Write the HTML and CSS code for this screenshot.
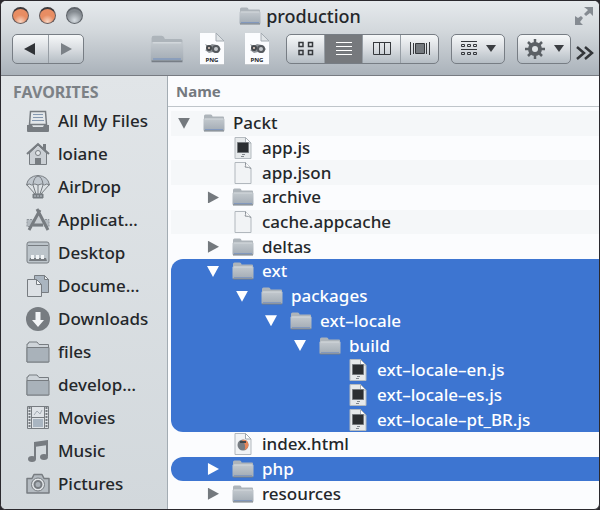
FILE: index.html
```html
<!DOCTYPE html>
<html lang="en">
<head>
<meta charset="utf-8">
<title>production</title>
<link rel="stylesheet" href="styles.css">
</head>
<body>
<svg class="defs" aria-hidden="true">
  <defs>
    <linearGradient id="g-folder" x1="0" y1="0" x2="0" y2="1"><stop offset="0" stop-color="#c3c9ce"/><stop offset="1" stop-color="#a2abb4"/></linearGradient>
  </defs>
  <symbol id="folder" viewBox="0 0 22 18">
    <path d="M1 3.500V2q0-1.500 1.500-1.500h5q1.200 0 1.700 1l.4 1H20q1 0 1 1V16H1z" fill="#adb4ba"/>
    <path d="M.5 5.500q0-1 1-1h19q1 0 1 1V16q0 1-1 1h-19q-1 0-1-1z" fill="url(#g-folder)"/>
    <path d="M2 5h18" stroke="#d2d7db"/><path d="M2 15.500h18" stroke="#8298bd"/><path d="M1 17h20" stroke="#777e86"/>
  </symbol>
  <symbol id="js" viewBox="0 0 18 22">
    <path d="M1 .5h10.500l5.500 5.500v15.500H1z" fill="#e6e9eb" stroke="#b4babf"/>
    <path d="M11.500.5v5.500H17z" fill="#fff" stroke="#a9b0b6"/>
    <path d="M3.500 5.500h11v10h-11z" fill="#2b2e31" stroke="#74787c"/><path d="M8 17.500h3M7 19.500h3" stroke="#83888d"/>
  </symbol>
  <symbol id="page" viewBox="0 0 18 22">
    <path d="M1 .5h10.500l5.500 5.500v15.500H1z" fill="#f1f3f5" stroke="#b1b7bd"/>
    <path d="M11.500.5q.5 4-.5 4.500 4 0 6 1.500" fill="#fff" stroke="#888e95"/>
  </symbol>
  <symbol id="html" viewBox="0 0 18 22">
    <path d="M1 .5h10.500l5.500 5.500v15.500H1z" fill="#f1f3f5" stroke="#b1b7bd"/>
    <path d="M11.500.5v5.500H17z" fill="#fff" stroke="#a1a8ae"/>
    <circle cx="9" cy="12" r="5.500" fill="#777c82"/><path d="M8 7q6-1 6.500 5-.5 4-4 5 2-5-2.500-10z" fill="#e8875a"/><path d="M6 8h6v2H6z" fill="#43474b"/>
  </symbol>
  <symbol id="png" viewBox="0 0 24 32">
    <path d="M0 0h16l8 8v24H0z" fill="#fbfcfe"/><path d="M16 0v8h8z" fill="#dfe3e6" stroke="#a4abb2"/>
    <path d="M5 11l4 2 3-2 5 1 4 4-3 4-5-1-4 1-4-3 3-1z" fill="#8d9297"/><circle cx="9" cy="15" r="3" fill="#44484c"/><circle cx="16" cy="16" r="4" fill="#54585d"/><circle cx="16" cy="16" r="2" fill="#c4c8cc"/><circle cx="9" cy="15" r="1" fill="#e6d0c4"/>
    <path d="M0 32h24" stroke="#8d949b"/>
  </symbol>
</svg>
<div class="window">
  <header class="chrome">
    <div class="titlebar">
      <div class="lights">
        <button class="light" aria-label="Close"></button>
        <button class="light" aria-label="Minimize"></button>
        <button class="light off" aria-label="Zoom"></button>
      </div>
      <h1 class="title"><svg class="title-icon"><use href="#folder"/></svg>production</h1>
      <button class="fullscreen" aria-label="Full screen"><svg width="20" height="20" viewBox="0 0 20 20" fill="#858b92"><path d="M10 1h9v9l-3-3-4 3-2-2 4-4zM1 10l3 2 3-2 2 2-3 4 3 3H1z"/></svg></button>
    </div>
    <div class="toolbar">
      <div class="group nav">
        <button aria-label="Back"><svg width="12" height="12" viewBox="0 0 12 12"><path d="M0 6l11-6v12z" fill="#303337"/></svg></button>
        <button aria-label="Forward"><svg width="12" height="12" viewBox="0 0 12 12"><path d="M12 6L1 0v12z" fill="#7b8187"/></svg></button>
      </div>
      <div class="shortcuts">
        <button class="shortcut-folder" aria-label="Folder"><svg class="big-folder"><use href="#folder"/></svg></button>
        <button class="png"><svg><use href="#png"/></svg><span>PNG</span></button>
        <button class="png"><svg><use href="#png"/></svg><span>PNG</span></button>
      </div>
      <div class="group views">
        <button aria-label="Icons"><svg width="16" height="16" viewBox="0 0 16 16" fill="none" stroke="#36393d" stroke-width="1.500"><path d="M1 1.500h4v4H1zM10.500 1.500h4v4h-4zM1 9.500h4v4H1zM10.500 9.500h4v4h-4z"/></svg></button>
        <button class="active" aria-label="List"><svg width="16" height="16" viewBox="0 0 16 16" stroke="#fff"><path d="M0 1.500h16M0 5.500h16M0 9.500h16M0 13.500h16"/></svg></button>
        <button aria-label="Columns"><svg width="18" height="16" viewBox="0 0 18 16" fill="none" stroke="#36393d"><path d="M.5 1.500h17v12H.5zM6.500 1.500v12M11.500 1.500v12M0 1.500h18"/></svg></button>
        <button aria-label="Cover Flow"><svg width="20" height="16" viewBox="0 0 20 16" stroke="#36393d"><path d="M.5 1v13M3.500 2v11M16.500 2v11M19.500 1v13"/><path d="M5.500 2.500h9v10h-9z" fill="#74797e"/></svg></button>
      </div>
      <button class="group menu" aria-label="Arrange"><svg width="16" height="16" viewBox="0 0 16 16" fill="none" stroke="#36393d"><path d="M0 .5h16M0 8.500h16M.5 3.500h3v2h-3zM6.500 3.500h3v2h-3zM12.500 3.500h3v2h-3zM.5 11.500h3v2h-3zM6.500 11.500h3v2h-3zM12.500 11.500h3v2h-3z"/></svg><i class="caret"></i></button>
      <button class="group menu" aria-label="Action"><svg width="20" height="20" viewBox="0 0 20 20"><path d="M10 0v20M0 10h20M3 3l14 14M17 3L3 17" stroke="#5b6065" stroke-width="2.500"/><circle cx="10" cy="10" r="5" fill="#dfe3e6" stroke="#5b6065" stroke-width="4"/></svg><i class="caret"></i></button>
      <button class="more" aria-label="More"><svg width="18" height="14" viewBox="0 0 18 14" fill="none" stroke="#33363a" stroke-width="2.500"><path d="M1 1l7 6-7 6M9 1l7 6-7 6"/></svg></button>
    </div>
  </header>
  <div class="content">
    <nav class="sidebar">
      <h2>FAVORITES</h2>
      <a href="#"><svg viewBox="0 0 24 24"><path d="M4.500 2.500h15l1 13h-17z" fill="#e3e7ea" stroke="#777c81" stroke-width="1.500"/><path d="M7 5.500h10M7 8.500h10M6 11.500h12" stroke="#8498b0"/><path d="M1 16h5l1 2h10l1-2h5v6q0 1-1 1H2q-1 0-1-1z" fill="#777c81"/></svg><span>All My Files</span></a>
      <a href="#"><svg viewBox="0 0 24 24"><path d="M17 2h3v6h-3z" fill="#777c81"/><path d="M3.500 11v11.500h17V11L12 3z" fill="#cbd0d5" stroke="#777c81"/><path d="M1 12L12 2l11 10" fill="none" stroke="#777c81" stroke-width="2"/><circle cx="12" cy="11" r="2.500" fill="#e4e8eb" stroke="#777c81"/><path d="M9 16h6v6H9z" fill="#777c81"/></svg><span>loiane</span></a>
      <a href="#"><svg viewBox="0 0 24 24" fill="none" stroke="#777c81"><path d="M.5 10Q2 1 12 .5 22 1 23.500 10q-3-2-5 0-3-2-6.500 0-3-2-6.500 0-2-2-5 0z" fill="#c0c7ce"/><path d="M7 9Q8 2 12 1q4 1 5 8M1 10l8 9M23 10l-8 9M7 10l3 9M17 10l-3 9M12 10v9"/><path d="M7 19h10v4H7z" fill="#777c81"/><path d="M8 21h8" stroke="#c0c7ce" stroke-dasharray="2 1"/></svg><span>AirDrop</span></a>
      <a href="#"><svg viewBox="0 0 24 24" fill="none" stroke="#777c81"><path d="M1 11.500h22v7H1z" fill="#b4bbc1" stroke="#8f959b" stroke-dasharray="2 1"/><path d="M12 5l7 14H5z" fill="#c9ced3" stroke="none"/><path d="M14 2L3 22M11 1l11 21M7 17h10" stroke-width="3"/></svg><span>Applicat…</span></a>
      <a href="#"><svg viewBox="0 0 24 24"><rect x="1" y="1" width="22" height="21" rx="2" fill="#bcc4ca" stroke="#777c81"/><path d="M2 4.500h20" stroke="#777c81"/><path d="M4 17h16l1 3H3z" fill="#777c81"/><path d="M5 14h3v4H5zM10 14h3v4h-3zM15 14h3v4h-3z" fill="#f1f4f6"/></svg><span>Desktop</span></a>
      <a href="#"><svg viewBox="0 0 24 24" stroke="#777c81"><path d="M8.500 1.500h10l4 4v13h-14z" fill="#aab5c0"/><path d="M18.500 1.500v4h4z" fill="#e8ecef"/><path d="M1.500 5.500h9l5 5v12h-14z" fill="#dde1e5"/><path d="M10.500 5.500v5h5z" fill="#f3f5f7"/></svg><span>Docume…</span></a>
      <a href="#"><svg viewBox="0 0 24 24"><circle cx="12" cy="12" r="12" fill="#777c81"/><path d="M9.500 5h5v8H18l-6 7-6-7h3.500z" fill="#f2f4f6"/></svg><span>Downloads</span></a>
      <a href="#"><svg viewBox="0 0 24 24"><path d="M1 7V4h1l1-2h8l2 2.500h9.500V22H1z" fill="#ced4d9" stroke="#777c81"/><path d="M1 7.500h22V22H1z" fill="#a9b2ba" stroke="#777c81"/></svg><span>files</span></a>
      <a href="#"><svg viewBox="0 0 24 24"><path d="M1 7V4h1l1-2h8l2 2.500h9.500V22H1z" fill="#ced4d9" stroke="#777c81"/><path d="M1 7.500h22V22H1z" fill="#a9b2ba" stroke="#777c81"/></svg><span>develop…</span></a>
      <a href="#"><svg viewBox="0 0 24 24"><path d="M1.500.5h21v22h-21z" fill="#dfe3e7" stroke="#777c81"/><path d="M5.500 1v22M18.500 1v22M5 11.500h14" stroke="#777c81"/><path d="M3.500 1v22M20.500 1v22" stroke="#777c81" stroke-width="2" stroke-dasharray="2 1"/><path d="M7 13h10v8H7z" fill="#a9b5c1"/><path d="M8 9l3-4 3 3 2-4" fill="none" stroke="#a4acb4"/></svg><span>Movies</span></a>
      <a href="#"><svg viewBox="0 0 24 24" fill="#777c81"><path d="M8 3l14-2v5L8 8z"/><path d="M9 5v15M21 3v14" stroke="#777c81" stroke-width="2"/><ellipse cx="6" cy="20" rx="4" ry="3"/><ellipse cx="18" cy="18" rx="4" ry="3"/></svg><span>Music</span></a>
      <a href="#"><svg viewBox="0 0 24 24"><path d="M1 6.500h5l2-4h8l2 4h5V21H1z" fill="#b4bbc1" stroke="#777c81" stroke-width="1.500" stroke-linejoin="round"/><circle cx="12" cy="12.500" r="6.500" fill="#e1e5e8" stroke="#777c81"/><circle cx="12" cy="12.500" r="3.500" fill="#aab1b8" stroke="#777c81" stroke-width="2"/></svg><span>Pictures</span></a>
    </nav>
    <main class="files">
      <div class="column-head">Name</div>
      <ul class="tree">
        <li class="l1"><i class="open"></i><svg><use href="#folder"/></svg><span>Packt</span></li>
        <li class="l2"><i></i><svg><use href="#js"/></svg><span>app.js</span></li>
        <li class="l2"><i></i><svg><use href="#page"/></svg><span>app.json</span></li>
        <li class="l2"><i class="closed"></i><svg><use href="#folder"/></svg><span>archive</span></li>
        <li class="l2"><i></i><svg><use href="#page"/></svg><span>cache.appcache</span></li>
        <li class="l2"><i class="closed"></i><svg><use href="#folder"/></svg><span>deltas</span></li>
        <li class="l2 selected first"><i class="open"></i><svg><use href="#folder"/></svg><span>ext</span></li>
        <li class="l3 selected"><i class="open"></i><svg><use href="#folder"/></svg><span>packages</span></li>
        <li class="l4 selected"><i class="open"></i><svg><use href="#folder"/></svg><span>ext–locale</span></li>
        <li class="l5 selected"><i class="open"></i><svg><use href="#folder"/></svg><span>build</span></li>
        <li class="l6 selected"><i></i><svg><use href="#js"/></svg><span>ext–locale–en.js</span></li>
        <li class="l6 selected"><i></i><svg><use href="#js"/></svg><span>ext–locale–es.js</span></li>
        <li class="l6 selected last"><i></i><svg><use href="#js"/></svg><span>ext–locale–pt_BR.js</span></li>
        <li class="l2"><i></i><svg><use href="#html"/></svg><span>index.html</span></li>
        <li class="l2 selected first last"><i class="closed"></i><svg><use href="#folder"/></svg><span>php</span></li>
        <li class="l2"><i class="closed"></i><svg><use href="#folder"/></svg><span>resources</span></li>
      </ul>
    </main>
  </div>
</div>
</body>
</html>
```
FILE: styles.css
```css
* { box-sizing: border-box; }
body {
  margin: 0;
  background: #2b292e;
  color: #24272a;
  font: 500 17px/24px "Noto Sans", "Open Sans", sans-serif;
}
button { border: 0; padding: 0; background: none; font: inherit; color: inherit; display: flex; align-items: center; justify-content: center; }
svg { display: block; flex: none; }
.defs { position: absolute; width: 0; height: 0; }

.window {
  min-height: 100vh;
  display: flex;
  flex-direction: column;
  border: 1px solid #2b292e;
  border-radius: 6px;
  overflow: hidden;
  background: #fbfcfe;
}
.chrome {
  background: linear-gradient(#e6eaed, #d3d8dc 40%, #aab2ba);
  border-bottom: 1px solid #777b82;
  height: 75px;
}
.titlebar {
  display: grid;
  grid-template-columns: 1fr auto 1fr;
  align-items: center;
  height: 29px;
  padding: 0 5px;
}
.lights { display: flex; gap: 10px; margin-left: 6px; }
.light {
  width: 17px;
  height: 17px;
  border-radius: 50%;
  border: 1px solid #63595a;
  border-top: 2px solid #3d3a3d;
  background: radial-gradient(circle at 50% 90%, #f7d5c2, #e88d63 45%);
}
.light.off { background: radial-gradient(circle at 50% 80%, #d7dde2, #83898f 65%); border-color: #5f646a; }
.title { display: flex; align-items: center; gap: 5px; margin: 0; font-size: 18px; font-weight: 500; }
.title-icon { width: 22px; height: 18px; }
.fullscreen { justify-self: end; }

.toolbar { display: flex; align-items: center; height: 37px; padding: 0 5px 0 11px; }
.group {
  display: flex;
  height: 30px;
  border: 1px solid #777d84;
  border-radius: 5px;
  background: linear-gradient(#f6f8f9, #d9dde1 50%, #b5bdc4);
  overflow: hidden;
}
.nav { width: 72px; }
.nav button { flex: 1; }
.nav button + button { border-left: 1px solid #969da4; }
.shortcuts { display: flex; align-items: center; gap: 21px; margin-left: 66px; }
.shortcut-folder { margin-right: -5px; }
.big-folder { width: 34px; height: 28px; }
.png { display: grid; width: 24px; }
.png svg, .png span { grid-area: 1 / 1; }
.png svg { width: 24px; height: 32px; }
.png span { align-self: end; font: 700 6px/10px "Noto Sans", sans-serif; }
.views { width: 153px; margin-left: 17px; }
.views button { flex: 1; }
.views button + button { border-left: 1px solid #969da4; }
.views .active { background: #76797d; }
.menu { width: 54px; align-items: center; gap: 9px; margin-left: 12px; }
.caret { border: 5px solid transparent; border-top: 7px solid #3b3e42; border-bottom: 0; }
.more { margin-left: auto; padding-top: 8px; }

.content { flex: 1; display: grid; grid-template-columns: 167px 1fr; }
.sidebar {
  background: linear-gradient(#e1e5e8, #d2d8dc);
  border-right: 1px solid #a3acb3;
}
.sidebar h2 { margin: 0; padding: 4px 12px 0; font-size: 16px; font-weight: 700; line-height: 24px; color: #7c8186; }
.sidebar a { display: flex; align-items: center; gap: 8px; height: 33px; padding-left: 25px; color: inherit; text-decoration: none; }
.sidebar a svg { width: 24px; height: 24px; }

.files { display: flex; flex-direction: column; }
.column-head { height: 31px; padding-left: 8px; line-height: 30px; font-size: 15px; font-weight: 700; color: #74797f; border-bottom: 1px solid #bfc5ca; }
.tree { flex: 1; display: grid; grid-auto-rows: 1fr; margin: 0; padding: 4px 0 3px 3px; list-style: none; }
.tree li { display: flex; align-items: center; height: 100%; }
.tree li:nth-child(odd):not(.selected) { background: #f5f7f9; }
.tree i { width: 12px; margin-right: 13px; flex: none; }
.tree i.open { height: 11px; background: #74797e; clip-path: polygon(0 0, 100% 0, 50% 100%); }
.tree i.closed { height: 12px; background: #74797e; clip-path: polygon(8% 0, 100% 50%, 8% 100%); }
.tree svg { width: 22px; height: 22px; margin-right: 8px; }
.tree .selected { background: #3d75d1; color: #fff; }
.tree .selected i { background: #fff; }
.tree i:not(.open):not(.closed) { background: none; }
.first { border-top-left-radius: 12px; }
.last { border-bottom-left-radius: 12px; }
.l1 { padding-left: 7px; }
.l2 { padding-left: 36px; }
.l3 { padding-left: 65px; }
.l4 { padding-left: 94px; }
.l5 { padding-left: 123px; }
.l6 { padding-left: 151px; }
```
